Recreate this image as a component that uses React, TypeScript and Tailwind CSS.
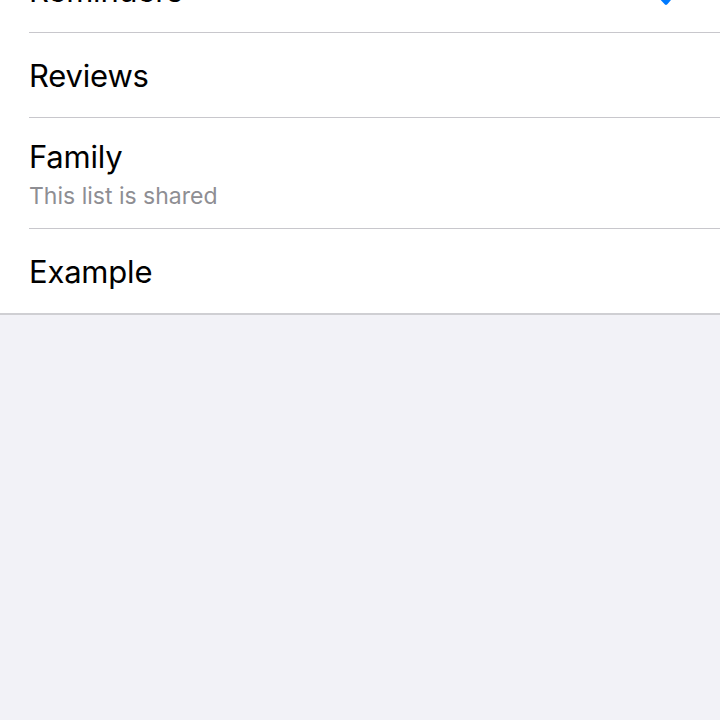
import React from 'react';

type Row = { title: string; subtitle?: string; checked?: boolean; height: string };

const rows: Row[] = [
  { title: 'Reminders', checked: true, height: 'h-[85px]' },
  { title: 'Reviews', height: 'h-[85px]' },
  { title: 'Family', subtitle: 'This list is shared', height: 'h-[111px]' },
  { title: 'Example', height: 'h-[84px]' },
];

function Check() {
  return (
    <svg width="30" height="24" viewBox="0 0 30 24" fill="none">
      <path d="M3 12.5 L11 21 L27 2.5" stroke="#007aff" strokeWidth="3.6" strokeLinecap="round" strokeLinejoin="round" />
    </svg>
  );
}

export default function App() {
  return (
    <div className="h-screen overflow-hidden bg-[#f2f2f7]" style={{ fontFamily: 'Inter, "Noto Sans", sans-serif' }}>
      <div className="-mt-[52px] bg-white border-b-2 border-[#cfcfd3]">
        {rows.map((row, i) => (
          <div key={row.title} className="pl-[29px]">
            <div
              className={`${row.height} flex items-center pr-[35px] ${i < rows.length - 1 ? 'border-b border-[#c8c7cc]' : ''}`}
            >
              <div className="flex-1 flex flex-col translate-y-[1px]">
                <span className="text-[31px] leading-[38px] text-black tracking-[-0.2px]">{row.title}</span>
                {row.subtitle && (
                  <span className="text-[23px] leading-[28px] text-[#8e8e93] mt-[6px]">{row.subtitle}</span>
                )}
              </div>
              {row.checked && (
                <div className="translate-y-[4px]">
                  <Check />
                </div>
              )}
            </div>
          </div>
        ))}
      </div>
    </div>
  );
}
